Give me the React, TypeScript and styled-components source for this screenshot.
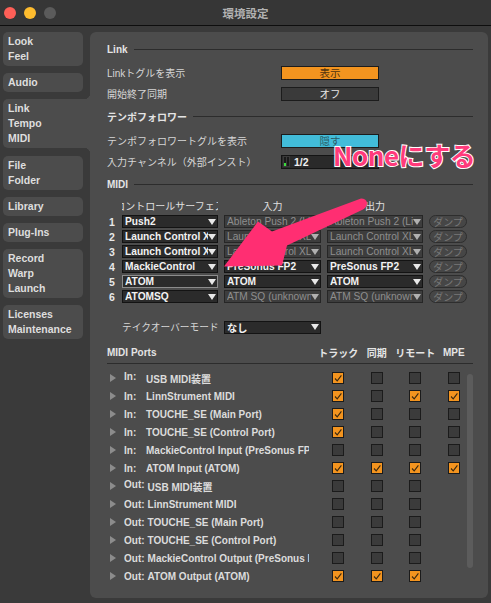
import styled, { createGlobalStyle } from 'styled-components';

const PANEL = '#4c4c4c';
const OUTER = '#3a3a3a';
const ORANGE = '#f3941f';

const GlobalStyle = createGlobalStyle`
  html, body {
    margin: 0;
    padding: 0;
    background: ${OUTER};
  }
  body {
    font-family: "Liberation Sans", "Noto Sans CJK JP", sans-serif;
    color: #dcdcdc;
  }
  * {
    box-sizing: border-box;
  }
`;

const Window = styled.div`
  width: 491px;
  height: 603px;
  display: flex;
  flex-direction: column;
  overflow: hidden;
  background: ${OUTER};
`;

const TitleBar = styled.div`
  height: 26px;
  flex-shrink: 0;
  display: grid;
  grid-template-columns: 1fr auto 1fr;
  align-items: center;
  padding: 0 4px;
  background: #363636;
  border-bottom: 1px solid #0e0e0e;
`;

const Lights = styled.div`
  display: flex;
  gap: 8px;
`;

const Light = styled.span<{ $color: string }>`
  width: 12px;
  height: 12px;
  border-radius: 50%;
  background: ${({ $color }) => $color};
`;

const Title = styled.div`
  font-family: "Noto Sans CJK JP", sans-serif;
  font-size: 11.5px;
  font-weight: 700;
  color: #b2b2b2;
`;

const Body = styled.div`
  flex: 1;
  min-height: 0;
  display: flex;
  gap: 7px;
  padding: 6px 3px 5px 3px;
`;

const Sidebar = styled.nav`
  width: 80px;
  flex-shrink: 0;
  display: flex;
  flex-direction: column;
  gap: 7px;
`;

const NavItem = styled.div<{ $active?: boolean }>`
  position: relative;
  padding: 2px 5px;
  font-size: 10.5px;
  font-weight: 700;
  line-height: 15px;
  color: #dedede;
  background: ${PANEL};
  border-radius: ${({ $active }) => ($active ? '5px 0 0 5px' : '5px')};
  width: ${({ $active }) => ($active ? 'calc(100% + 7px)' : '100%')};
  margin-bottom: ${({ $active }) => ($active ? '1px' : '0')};

  ${({ $active }) =>
    $active &&
    `
    &::before, &::after {
      content: '';
      position: absolute;
      right: 0;
      width: 6px;
      height: 6px;
    }
    &::before {
      top: -6px;
      background: radial-gradient(circle at 0 0, transparent 6px, ${PANEL} 6.5px);
    }
    &::after {
      bottom: -6px;
      background: radial-gradient(circle at 0 100%, transparent 6px, ${PANEL} 6.5px);
    }
  `}
`;

const Panel = styled.main`
  position: relative;
  flex: 1;
  display: flex;
  flex-direction: column;
  padding: 10px 15px 16px 17px;
  background: ${PANEL};
  border-radius: 6px;
  font-size: 10px;
`;

const SectionHeader = styled.div<{ $gap?: number }>`
  height: 14px;
  display: flex;
  align-items: center;
  gap: 6px;
  margin-top: ${({ $gap }) => $gap ?? 0}px;
  font-weight: 700;
  color: #e4e4e4;

  &::after {
    content: '';
    flex: 1;
    height: 1px;
    background: #2c2c2c;
  }
`;

const SettingRow = styled.div<{ $gap?: number }>`
  height: 21px;
  display: flex;
  align-items: center;
  margin-top: ${({ $gap }) => $gap ?? 0}px;
`;

const SettingLabel = styled.span`
  width: 174px;
  color: #d6d6d6;
  white-space: nowrap;
`;

const ToggleButton = styled.div<{ $bg: string; $fg: string }>`
  width: 98px;
  height: 14px;
  display: flex;
  align-items: center;
  justify-content: center;
  border: 1px solid #1c1c1c;
  background: ${({ $bg }) => $bg};
  color: ${({ $fg }) => $fg};
  font-size: 10.5px;
`;

const ChannelField = styled.div`
  width: 98px;
  height: 14px;
  display: flex;
  align-items: center;
  gap: 5px;
  padding-left: 2px;
  border: 1px solid #141414;
  background: #2a2a2a;
  color: #f0f0f0;
  font-weight: 700;
  font-size: 10.5px;
`;

const Meter = styled.div`
  display: flex;
  gap: 1px;
  height: 9px;
`;

const MeterBar = styled.span<{ $level: number }>`
  width: 2px;
  height: 100%;
  background: linear-gradient(
    to top,
    #3cdc3c ${({ $level }) => $level}%,
    #1a1a1a ${({ $level }) => $level}%
  );
  outline: 1px solid #3a3a3a;
`;

const SurfaceGrid = styled.div<{ $gap?: number }>`
  display: grid;
  grid-template-columns: 9px 96px 97px 96px 38px;
  column-gap: 6px;
  row-gap: 2px;
  align-items: center;
  margin-top: ${({ $gap }) => $gap ?? 0}px;
`;

const ColumnHead = styled.div`
  height: 14px;
  display: flex;
  align-items: center;
  justify-content: center;
  overflow: hidden;
  white-space: nowrap;
  font-size: 10px;
  color: #e0e0e0;
`;

const RowNumber = styled.span`
  padding-left: 2px;
  font-weight: 700;
  font-size: 10.5px;
  color: #e8e8e8;
`;

const Select = styled.div<{ $disabled?: boolean; $focused?: boolean }>`
  height: 13px;
  display: flex;
  align-items: center;
  padding: 0 1px 0 2px;
  border: 1px solid
    ${({ $disabled, $focused }) => ($focused ? '#8c8c8c' : $disabled ? '#262626' : '#131313')};
  background: ${({ $disabled }) => ($disabled ? '#3d3d3d' : '#2b2b2b')};
  color: ${({ $disabled }) => ($disabled ? '#8e8e8e' : '#f2f2f2')};
  font-size: 10.2px;
  font-weight: ${({ $disabled }) => ($disabled ? 400 : 700)};
`;

const SelectText = styled.span`
  flex: 1;
  overflow: hidden;
  white-space: nowrap;
`;

const Caret = styled.span<{ $dim?: boolean }>`
  flex-shrink: 0;
  width: 0;
  height: 0;
  border-left: 4px solid transparent;
  border-right: 4px solid transparent;
  border-top: 6px solid ${({ $dim }) => ($dim ? '#b0b0b0' : '#e8e8e8')};
`;

const DumpButton = styled.div`
  height: 13px;
  display: flex;
  align-items: center;
  justify-content: center;
  border: 1px solid #2e2e2e;
  border-radius: 7px;
  background: #464646;
  color: #787878;
  font-size: 10px;
`;

const TakeoverLabel = styled.span`
  grid-column: 2;
  white-space: nowrap;
  color: #d6d6d6;
  font-size: 9.7px;
`;

const PortGrid = styled.div`
  display: grid;
  grid-template-columns: 17px 185px 10px repeat(4, 38.5px);
  align-items: center;
`;

const PortsHeader = styled(PortGrid)`
  height: 14px;
  margin-top: 11px;
  font-weight: 700;
  color: #e4e4e4;
`;

const PortsTitle = styled.span`
  grid-column: 1 / 4;
`;

const PortsColumn = styled.span`
  display: flex;
  justify-content: center;
  white-space: nowrap;
`;

const Divider = styled.div`
  height: 1px;
  margin-top: 4px;
  background: #2c2c2c;
`;

const PortList = styled.div`
  position: relative;
  flex: 1;
  min-height: 0;
  margin-top: 5px;
  overflow: hidden;
`;

const PortRow = styled(PortGrid)`
  height: 18px;
`;

const Disclosure = styled.span`
  justify-self: start;
  margin-left: 3px;
  width: 0;
  height: 0;
  border-top: 4px solid transparent;
  border-bottom: 4px solid transparent;
  border-left: 6px solid #8c8c8c;
`;

const PortName = styled.span`
  display: flex;
  overflow: hidden;
  white-space: nowrap;
  font-weight: 700;
  color: #dcdcdc;
`;

const PortPrefix = styled.span<{ $wide?: boolean }>`
  flex-shrink: 0;
  width: ${({ $wide }) => ($wide ? 'auto' : '22px')};
  margin-right: ${({ $wide }) => ($wide ? '3px' : '0')};
`;

const CheckCell = styled.span<{ $col: number }>`
  grid-column: ${({ $col }) => $col};
  display: flex;
  justify-content: center;
`;

const Check = styled.span<{ $on?: boolean }>`
  width: 12px;
  height: 12px;
  display: flex;
  align-items: center;
  justify-content: center;
  border: 1px solid #1b1b1b;
  background: ${({ $on }) => ($on ? ORANGE : '#3b3b3b')};
`;

const ScrollThumb = styled.div`
  position: absolute;
  top: 5px;
  right: 0;
  width: 6px;
  height: 194px;
  border-radius: 3px;
  background: #5c5c5c;
`;

const Callout = styled.div`
  position: absolute;
  left: 243px;
  top: 110px;
  font-family: "Noto Sans CJK JP", sans-serif;
  font-size: 26px;
  font-weight: 700;
  line-height: 1;
  letter-spacing: -0.5px;
  color: #ff3b7b;
  -webkit-text-stroke: 2px #ffffff;
  paint-order: stroke fill;
  white-space: nowrap;
  pointer-events: none;
`;

const ArrowOverlay = styled.svg`
  position: absolute;
  inset: 0;
  width: 100%;
  height: 100%;
  pointer-events: none;
  overflow: visible;
`;

const surfaces = [
  { s: 'Push2', i: 'Ableton Push 2 (Live Port)', iOff: true, o: 'Ableton Push 2 (Live Port)', oOff: true },
  { s: 'Launch Control XL', i: 'Launch Control XL', iOff: true, o: 'Launch Control XL', oOff: true },
  { s: 'Launch Control XL', i: 'Launch Control XL', iOff: true, o: 'Launch Control XL', oOff: true },
  { s: 'MackieControl', i: 'PreSonus FP2', iOff: false, o: 'PreSonus FP2', oOff: false },
  { s: 'ATOM', i: 'ATOM', iOff: false, o: 'ATOM', oOff: false, focused: true },
  { s: 'ATOMSQ', i: 'ATM SQ (unknown)', iOff: true, o: 'ATM SQ (unknown)', oOff: true },
];

const ports: { dir: 'In' | 'Out'; name: string; checks: boolean[] }[] = [
  { dir: 'In', name: 'USB MIDI装置', checks: [true, false, false, false] },
  { dir: 'In', name: 'LinnStrument MIDI', checks: [true, false, true, true] },
  { dir: 'In', name: 'TOUCHE_SE (Main Port)', checks: [true, false, false, false] },
  { dir: 'In', name: 'TOUCHE_SE (Control Port)', checks: [true, false, false, false] },
  { dir: 'In', name: 'MackieControl Input (PreSonus FP2)', checks: [false, false, false, false] },
  { dir: 'In', name: 'ATOM Input (ATOM)', checks: [true, true, true, true] },
  { dir: 'Out', name: 'USB MIDI装置', checks: [false, false, false] },
  { dir: 'Out', name: 'LinnStrument MIDI', checks: [false, false, false] },
  { dir: 'Out', name: 'TOUCHE_SE (Main Port)', checks: [false, false, false] },
  { dir: 'Out', name: 'TOUCHE_SE (Control Port)', checks: [false, false, false] },
  { dir: 'Out', name: 'MackieControl Output (PreSonus FP2)', checks: [false, false, false] },
  { dir: 'Out', name: 'ATOM Output (ATOM)', checks: [true, true, true] },
];

const navItems = [
  ['Look', 'Feel'],
  ['Audio'],
  ['Link', 'Tempo', 'MIDI'],
  ['File', 'Folder'],
  ['Library'],
  ['Plug-Ins'],
  ['Record', 'Warp', 'Launch'],
  ['Licenses', 'Maintenance'],
];

const Tick = () => (
  <svg width="10" height="10" viewBox="0 0 10 10">
    <polyline points="2,5.5 4.2,7.8 8.4,2.4" fill="none" stroke="#3a2810" strokeWidth="1.1" />
  </svg>
);

const Dropdown = ({ text, off, focused }: { text: string; off?: boolean; focused?: boolean }) => (
  <Select $disabled={off} $focused={focused}>
    <SelectText>{text}</SelectText>
    <Caret $dim={off} />
  </Select>
);

const Row = ({ n, row }: { n: number; row: (typeof surfaces)[number] }) => (
  <>
    <RowNumber>{n}</RowNumber>
    <Dropdown text={row.s} focused={row.focused} />
    <Dropdown text={row.i} off={row.iOff} />
    <Dropdown text={row.o} off={row.oOff} />
    <DumpButton>ダンプ</DumpButton>
  </>
);

const App = () => {
  return (
    <>
      <GlobalStyle />
      <Window>
        <TitleBar>
          <Lights>
            <Light $color="#fe5f57" />
            <Light $color="#febc2e" />
            <Light $color="#5b5b5b" />
          </Lights>
          <Title>環境設定</Title>
          <span />
        </TitleBar>
        <Body>
          <Sidebar>
            {navItems.map((lines) => (
              <NavItem key={lines[0]} $active={lines[0] === 'Link'}>
                {lines.map((l) => (
                  <div key={l}>{l}</div>
                ))}
              </NavItem>
            ))}
          </Sidebar>

          <Panel>
            <SectionHeader>Link</SectionHeader>
            <SettingRow $gap={6}>
              <SettingLabel>Linkトグルを表示</SettingLabel>
              <ToggleButton $bg={ORANGE} $fg="#4d3310">表示</ToggleButton>
            </SettingRow>
            <SettingRow>
              <SettingLabel>開始終了同期</SettingLabel>
              <ToggleButton $bg="#3a3a3a" $fg="#e6e6e6">オフ</ToggleButton>
            </SettingRow>

            <SectionHeader $gap={5}>テンポフォロワー</SectionHeader>
            <SettingRow $gap={7}>
              <SettingLabel>テンポフォロワートグルを表示</SettingLabel>
              <ToggleButton $bg="#42bcd9" $fg="#2a5c68">隠す</ToggleButton>
            </SettingRow>
            <SettingRow>
              <SettingLabel>入力チャンネル（外部インスト）</SettingLabel>
              <ChannelField>
                <Meter>
                  <MeterBar $level={30} />
                  <MeterBar $level={0} />
                </Meter>
                1/2
              </ChannelField>
            </SettingRow>

            <SectionHeader $gap={5}>MIDI</SectionHeader>
            <SurfaceGrid $gap={7}>
              <span />
              <ColumnHead>コントロールサーフェス</ColumnHead>
              <ColumnHead>入力</ColumnHead>
              <ColumnHead>出力</ColumnHead>
              <span />
            </SurfaceGrid>
            <SurfaceGrid $gap={3}>
              {surfaces.map((row, idx) => (
                <Row key={idx} n={idx + 1} row={row} />
              ))}
            </SurfaceGrid>

            <SurfaceGrid $gap={17}>
              <TakeoverLabel>テイクオーバーモード</TakeoverLabel>
              <Dropdown text="なし" />
            </SurfaceGrid>

            <PortsHeader>
              <PortsTitle>MIDI Ports</PortsTitle>
              <PortsColumn>トラック</PortsColumn>
              <PortsColumn>同期</PortsColumn>
              <PortsColumn>リモート</PortsColumn>
              <PortsColumn>MPE</PortsColumn>
            </PortsHeader>
            <Divider />
            <PortList>
              {ports.map((p, idx) => (
                <PortRow key={idx}>
                  <Disclosure />
                  <PortName>
                    <PortPrefix $wide={p.dir === 'Out'}>{p.dir}:</PortPrefix>
                    {p.name}
                  </PortName>
                  {p.checks.map((on, c) => (
                    <CheckCell key={c} $col={4 + c}>
                      <Check $on={on}>{on && <Tick />}</Check>
                    </CheckCell>
                  ))}
                </PortRow>
              ))}
              <ScrollThumb />
            </PortList>

            <ArrowOverlay viewBox="0 0 398 565">
              <path
                d="M 271 166 Q 276 166 277 170 Q 277 175 273 177 L 197 213 L 192 233 L 134 234 L 168 189 L 182 199 Z"
                fill="#ff2e72"
              />
            </ArrowOverlay>
            <Callout>Noneにする</Callout>
          </Panel>
        </Body>
      </Window>
    </>
  );
};

export default App;
